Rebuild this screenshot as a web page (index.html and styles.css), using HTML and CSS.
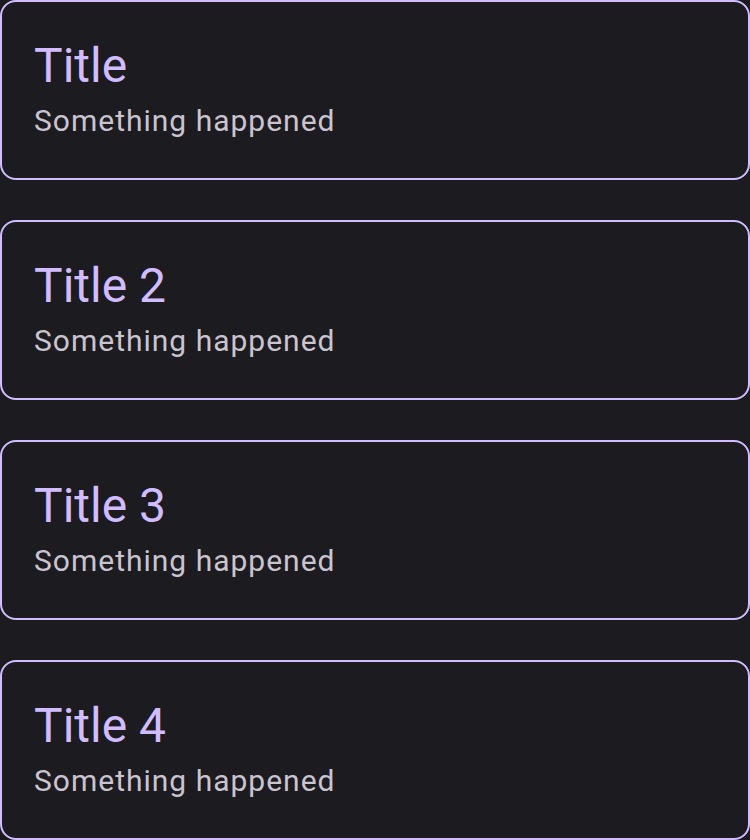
FILE: index.html
```html
<!DOCTYPE html>
<html>
<head>
<meta charset="utf-8">
<link rel="stylesheet" href="styles.css">
</head>
<body>
<div class="list">
  <div class="card">
    <div class="title">Title</div>
    <div class="subtitle">Something happened</div>
  </div>
  <div class="card">
    <div class="title">Title 2</div>
    <div class="subtitle">Something happened</div>
  </div>
  <div class="card">
    <div class="title">Title 3</div>
    <div class="subtitle">Something happened</div>
  </div>
  <div class="card">
    <div class="title">Title 4</div>
    <div class="subtitle">Something happened</div>
  </div>
</div>
</body>
</html>
```

FILE: styles.css
```css
html, body {
  margin: 0;
  padding: 0;
  background: #1C1B1F;
}
body {
  font-family: Roboto, "Noto Sans", sans-serif;
  width: 750px;
  height: 840px;
  overflow: hidden;
}
.list {
  display: flex;
  flex-direction: column;
  gap: 40px;
}
.card {
  box-sizing: border-box;
  height: 180px;
  border: 2px solid #D0BCFF;
  border-radius: 16px;
  padding: 36px 32px 0 32px;
  display: flex;
  flex-direction: column;
}
.title {
  color: #D0BCFF;
  font-size: 48px;
  line-height: 56px;
}
.subtitle {
  color: #CAC4D0;
  font-size: 30px;
  line-height: 32px;
  letter-spacing: 1px;
  margin-top: 11px;
}
```
